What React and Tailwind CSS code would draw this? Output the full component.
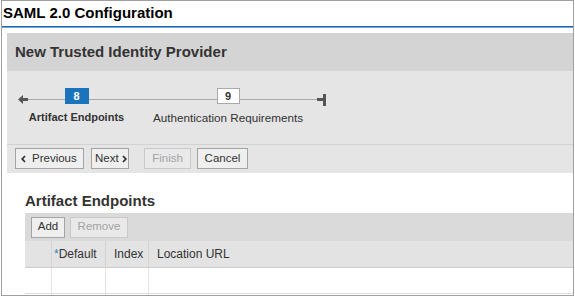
import React from "react";

const font = { fontFamily: '"Liberation Sans", Arial, sans-serif' };

function Btn({ children, disabled, className = "" }) {
  return (
    <div
      className={
        "h-[21px] flex items-center border text-[11.5px] leading-none shrink-0 whitespace-nowrap overflow-hidden " +
        (disabled
          ? "border-[#c9c9c9] bg-[#e9e9e9] text-[#a3a3a3] "
          : "border-[#a3a3a3] bg-[#efefef] text-[#333] ") +
        className
      }
    >
      {children}
    </div>
  );
}

function Chevron({ dir }) {
  return (
    <svg width="5" height="8" viewBox="0 0 5 8" className="shrink-0">
      {dir === "left" ? (
        <path d="M4 1 L1.2 4 L4 7" fill="none" stroke="#333" strokeWidth="1.8" />
      ) : (
        <path d="M1 1 L3.8 4 L1 7" fill="none" stroke="#333" strokeWidth="1.8" />
      )}
    </svg>
  );
}

function Row({ bg, border, h, children }) {
  return (
    <div className={"grid grid-cols-[27px_54px_43px_1fr] " + h + " " + bg + " " + border}>
      {children}
    </div>
  );
}

export default function App() {
  return (
    <div className="w-[575px] h-[297px] bg-white overflow-hidden" style={font}>
      <div className="ml-px w-[573px] h-[296px] border border-[#a0a0a0] overflow-hidden">
        {/* title */}
        <div className="h-[25px] flex items-center pl-px text-[15px] font-bold text-black">
          SAML 2.0 Configuration
        </div>
        <div className="h-px bg-[#1f66b0]" />
        <div className="h-px bg-[#6fa6dc]" />
        <div className="h-[5px]" />
        <div className="ml-[5px]">
          {/* panel header */}
          <div className="h-[38px] bg-[#d4d4d4] flex items-center pl-[8px] pt-px text-[15px] font-bold text-[#333]">
            New Trusted Identity Provider
          </div>
          {/* steps */}
          <div className="h-[73px] bg-[#e5e5e5] pl-[11px] pt-[17px]">
            <div className="relative flex items-start w-[310px]">
              <div className="absolute left-[4px] top-[11px] w-[296px] h-px bg-[#a9a9a9]" />
              <svg width="10" height="9" viewBox="0 0 10 9" className="relative mt-[7px] shrink-0">
                <path d="M0 4.5 L5 0 L5 9 Z" fill="#555" />
                <rect x="4" y="3" width="6" height="3" fill="#555" />
              </svg>
              <div className="relative ml-px w-[95px] flex flex-col items-center">
                <div className="w-[24px] h-[16px] bg-[#1b74bb] text-white text-[11px] font-bold flex items-center justify-center">
                  8
                </div>
                <div className="mt-[7px] text-[11px] leading-[13px] font-bold text-[#333] whitespace-nowrap">
                  Artifact Endpoints
                </div>
              </div>
              <div className="relative ml-[29px] w-[150px] flex flex-col items-center">
                <div className="w-[23px] h-[16px] bg-white border border-[#a9a9a9] text-[#333] text-[11px] font-bold flex items-center justify-center">
                  9
                </div>
                <div className="mt-[7px] text-[11.7px] leading-[13px] text-[#333] whitespace-nowrap">
                  Authentication Requirements
                </div>
              </div>
              <svg width="9" height="12" viewBox="0 0 9 12" className="relative ml-[14px] mt-[6px] shrink-0">
                <rect x="0" y="4" width="6" height="3" fill="#555" />
                <rect x="6" y="0" width="3" height="12" fill="#555" />
              </svg>
            </div>
          </div>
          {/* toolbar */}
          <div className="h-[29px] bg-[#e5e5e5] border-t border-[#d2d2d2] pl-[8px] pt-[3px] flex items-start">
            <Btn className="pl-[5px] pr-[7px] gap-[6px] w-[69px]">
              <Chevron dir="left" />
              <span>Previous</span>
            </Btn>
            <Btn className="ml-[7px] pl-[3px] gap-[3px] w-[38px]">
              <span>Next</span>
              <Chevron dir="right" />
            </Btn>
            <Btn disabled className="ml-[15px] w-[47px] justify-center">Finish</Btn>
            <Btn className="ml-[6px] w-[51px] justify-center">Cancel</Btn>
          </div>
          {/* content */}
          <div className="pl-[18px] pt-[19px] bg-white">
            <div className="h-[21px] text-[15px] leading-[17px] font-bold text-[#333]">
              Artifact Endpoints
            </div>
            <div className="h-[28px] bg-[#dadada] flex items-center pl-[6px] gap-[5px]">
              <Btn className="w-[34px] justify-center">Add</Btn>
              <Btn disabled className="w-[58px] justify-center">Remove</Btn>
            </div>
            <Row h="h-[27px]" bg="bg-[#e3e3e3]" border="border-b border-[#cdcdcd]">
              <div className="border-r border-[#d3d3d3]" />
              <div className="border-r border-[#d3d3d3] flex items-center pl-[2px] text-[12px] text-[#333]">
                <span className="text-[#2f7fc8]">*</span>Default
              </div>
              <div className="border-r border-[#d3d3d3] flex items-center pl-[8px] text-[12px] text-[#333]">Index</div>
              <div className="flex items-center pl-[8px] text-[12px] text-[#333]">Location URL</div>
            </Row>
            <Row h="h-[26px]" bg="bg-white" border="border-b border-[#dedede]">
              <div className="border-r border-[#e3e3e3]" />
              <div className="border-r border-[#e3e3e3]" />
              <div className="border-r border-[#e3e3e3]" />
              <div />
            </Row>
            <Row h="h-[26px]" bg="bg-white" border="">
              <div className="border-r border-[#e3e3e3]" />
              <div className="border-r border-[#e3e3e3]" />
              <div className="border-r border-[#e3e3e3]" />
              <div />
            </Row>
          </div>
        </div>
      </div>
    </div>
  );
}
